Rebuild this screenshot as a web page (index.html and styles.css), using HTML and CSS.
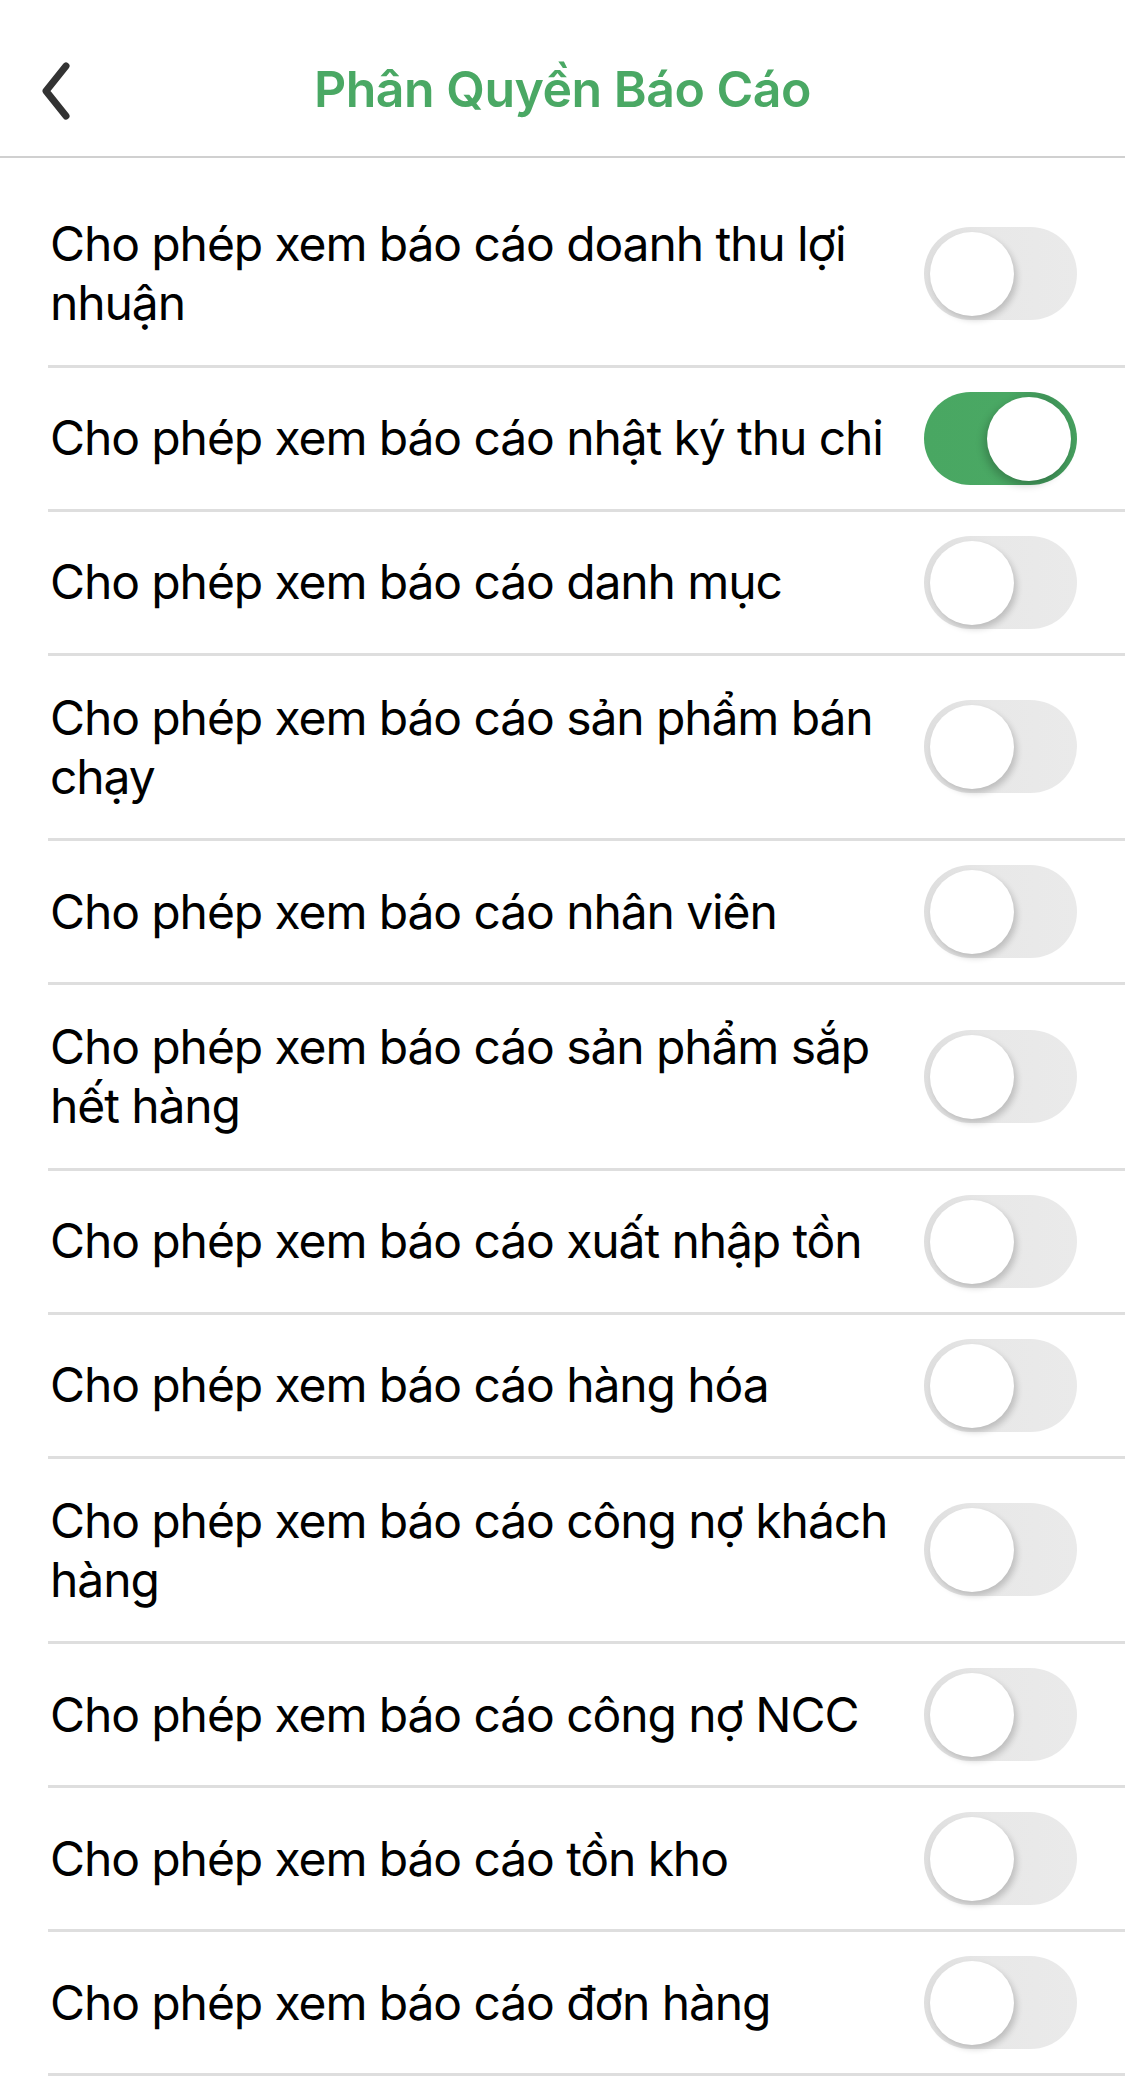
FILE: index.html
```html
<!DOCTYPE html>
<html lang="vi">
<head>
<meta charset="utf-8">
<title>Phân Quyền Báo Cáo</title>
<link rel="stylesheet" href="styles.css">
</head>
<body>
<header class="nav">
  <button class="back" aria-label="Quay lại">
    <svg width="40" height="60" viewBox="0 0 40 60"><path d="M30 4 L10 29 L30 54" fill="none" stroke="#333" stroke-width="7" stroke-linecap="round" stroke-linejoin="round"/></svg>
  </button>
  <h1 class="title">Phân Quyền Báo Cáo</h1>
</header>
<ul class="list">
  <li class="row"><span class="label">Cho phép xem báo cáo doanh thu lợi nhuận</span><span class="switch"></span></li>
  <li class="row"><span class="label">Cho phép xem báo cáo nhật ký thu chi</span><span class="switch on"></span></li>
  <li class="row"><span class="label">Cho phép xem báo cáo danh mục</span><span class="switch"></span></li>
  <li class="row"><span class="label">Cho phép xem báo cáo sản phẩm bán chạy</span><span class="switch"></span></li>
  <li class="row"><span class="label">Cho phép xem báo cáo nhân viên</span><span class="switch"></span></li>
  <li class="row"><span class="label">Cho phép xem báo cáo sản phẩm sắp hết hàng</span><span class="switch"></span></li>
  <li class="row"><span class="label">Cho phép xem báo cáo xuất nhập tồn</span><span class="switch"></span></li>
  <li class="row"><span class="label">Cho phép xem báo cáo hàng hóa</span><span class="switch"></span></li>
  <li class="row"><span class="label">Cho phép xem báo cáo công nợ khách hàng</span><span class="switch"></span></li>
  <li class="row"><span class="label">Cho phép xem báo cáo công nợ NCC</span><span class="switch"></span></li>
  <li class="row"><span class="label">Cho phép xem báo cáo tồn kho</span><span class="switch"></span></li>
  <li class="row"><span class="label">Cho phép xem báo cáo đơn hàng</span><span class="switch"></span></li>
</ul>
</body>
</html>
```
FILE: styles.css
```css
* { box-sizing: border-box; }
html, body { margin: 0; padding: 0; background: #fff; }
body {
  font-family: Inter, "Liberation Sans", "Noto Sans", sans-serif;
  color: #000;
  width: 1125px;
  height: 2096px;
  overflow: hidden;
}
.nav {
  height: 158px;
  display: flex;
  align-items: center;
  justify-content: center;
  border-bottom: 2px solid #d0d0d0;
  position: relative;
}
.back {
  position: absolute;
  left: 34px;
  top: 62px;
  width: 44px;
  height: 60px;
  padding: 0;
  border: 0;
  background: none;
  display: flex;
  align-items: center;
  justify-content: center;
}
.title {
  margin: 0;
  padding-top: 22px;
  font-size: 50px;
  font-weight: 600;
  color: #4aa864;
  letter-spacing: -0.5px;
}
.list {
  list-style: none;
  margin: 24px 0 0 48px;
  padding: 0;
}
.row {
  display: flex;
  align-items: center;
  min-height: 144px;
  padding: 0 48px 0 2px;
  border-bottom: 3px solid #dedede;
  gap: 14px;
}
.label {
  flex: 1;
  padding: 32px 0;
  font-size: 48px;
  line-height: 59.25px;
  letter-spacing: -1.1px;
}
.switch {
  flex: none;
  position: relative;
  width: 153px;
  height: 93px;
  border-radius: 47px;
  background: linear-gradient(90deg, #dedede 0%, #e8e8e8 45%, #eaeaea 100%);
}
.switch::after {
  content: "";
  position: absolute;
  left: 6px;
  top: 5px;
  width: 84px;
  height: 84px;
  border-radius: 50%;
  background: #fff;
  box-shadow: 3px 4px 6px rgba(0,0,0,0.18);
}
.switch.on {
  background: linear-gradient(90deg, #49a762 0%, #4aa864 55%, #3f9458 80%, #46a05f 100%);
}
.switch.on::after {
  left: 63px;
  box-shadow: -3px 4px 8px rgba(0,0,0,0.22);
}
```
